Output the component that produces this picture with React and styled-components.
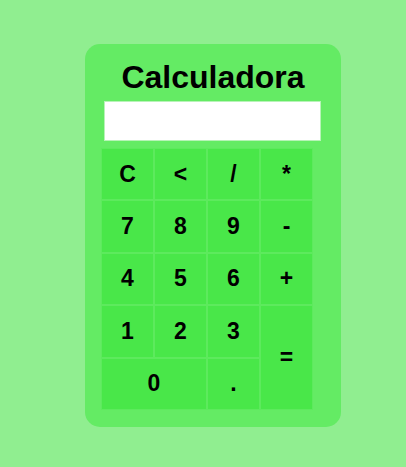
import React, { useState } from "react"
import styled, { createGlobalStyle } from "styled-components"

const GlobalStyle = createGlobalStyle`
  html, body {
    margin: 0;
    padding: 0;
    background: #90ee90;
    font-family: "Liberation Sans", Arial, sans-serif;
  }
`

const Page = styled.div`
  min-height: 467px;
  display: flex;
  justify-content: center;
  align-items: flex-start;
  padding: 44px 0 0 20px;
  box-sizing: border-box;
`

const Calculator = styled.div`
  width: 256px;
  height: 383px;
  box-sizing: border-box;
  background: #64eb64;
  border-radius: 15px;
  padding: 0 28px 0 16px;
  display: flex;
  flex-direction: column;
`

const Title = styled.h1`
  margin: 15px 0 0 0;
  margin-right: -12px;
  font-size: 32px;
  line-height: 37px;
  font-weight: bold;
  text-align: center;
  color: #000;
`

const Display = styled.input`
  box-sizing: border-box;
  width: 217px;
  height: 40px;
  margin: 5px 0 0 3px;
  border: 1px solid #b8f3b8;
  background: #fff;
  font-family: inherit;
  font-size: 22px;
  text-align: right;
  padding: 0 8px;
  outline: none;
`

const Keys = styled.div`
  margin-top: 7px;
  display: grid;
  grid-template-columns: repeat(4, 53px);
  grid-template-rows: repeat(5, 52.4px);
`

const Key = styled.button`
  box-sizing: border-box;
  margin: 0;
  padding: 0;
  background: #49e749;
  border: 1px solid #5dea5d;
  color: #000;
  font-family: "Liberation Sans", Arial, sans-serif;
  font-weight: bold;
  font-size: 23px;
  cursor: pointer;
  grid-column: ${p => (p.wide ? "span 2" : "auto")};
  grid-row: ${p => (p.tall ? "span 2" : "auto")};
  &:hover {
    background: #40dd40;
  }
`

const keys = [
  { label: "C" },
  { label: "<" },
  { label: "/" },
  { label: "*" },
  { label: "7" },
  { label: "8" },
  { label: "9" },
  { label: "-" },
  { label: "4" },
  { label: "5" },
  { label: "6" },
  { label: "+" },
  { label: "1" },
  { label: "2" },
  { label: "3" },
  { label: "=", tall: true },
  { label: "0", wide: true },
  { label: "." },
]

export default function App() {
  const [value, setValue] = useState("")

  const press = k => {
    if (k === "C") return setValue("")
    if (k === "<") return setValue(v => v.slice(0, -1))
    if (k === "=") {
      try {
        // eslint-disable-next-line no-new-func
        const r = Function(`"use strict";return (${value})`)()
        setValue(String(r))
      } catch (e) {
        setValue("")
      }
      return
    }
    setValue(v => v + k)
  }

  return (
    <>
      <GlobalStyle />
      <Page>
        <Calculator>
          <Title>Calculadora</Title>
          <Display value={value} readOnly />
          <Keys>
            {keys.map(k => (
              <Key
                key={k.label}
                wide={k.wide ? 1 : 0}
                tall={k.tall ? 1 : 0}
                onClick={() => press(k.label)}
              >
                {k.label}
              </Key>
            ))}
          </Keys>
        </Calculator>
      </Page>
    </>
  )
}
